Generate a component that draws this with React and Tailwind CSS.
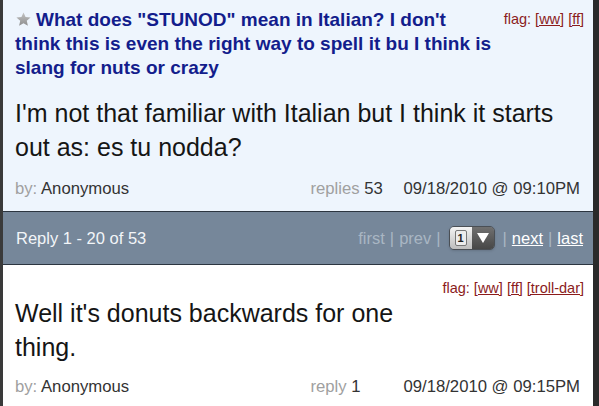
import React from "react";

const font = { fontFamily: '"Liberation Sans", Arial, sans-serif' };

const Flag = ({ troll }) => (
  <div className="text-[14.5px] text-[#8b1c1c] whitespace-nowrap leading-[15px]">
    flag: <span className="underline">[ww]</span> <span className="underline">[ff]</span>
    {troll && <> <span className="underline">[troll-dar]</span></>}
  </div>
);

const Meta = ({ label, count, date }) => (
  <div className="flex items-center text-[16.7px] leading-[17px]">
    <div>
      <span className="text-[#a0a0a0]">by:</span> <span className="text-[#333]">Anonymous</span>
    </div>
    <div className="ml-auto w-[93px] whitespace-nowrap">
      <span className="text-[#a0a0a0]">{label}</span> <span className="text-[#333]">{count}</span>
    </div>
    <div className="text-[#333] whitespace-nowrap">{date}</div>
  </div>
);

const Star = () => (
  <svg width="17" height="17" viewBox="0 0 24 24" className="inline-block align-[-2px] mr-[4px]">
    <defs>
      <linearGradient id="sg" x1="0" y1="0" x2="0" y2="1">
        <stop offset="0" stopColor="#c4c4c4" />
        <stop offset="1" stopColor="#8e8e8e" />
      </linearGradient>
    </defs>
    <path d="M12 2l2.9 6.6 7.1.6-5.4 4.7 1.6 7-6.2-3.7-6.2 3.7 1.6-7L2 9.2l7.1-.6z" fill="url(#sg)" />
  </svg>
);

export default function App() {
  return (
    <div className="w-[599px] h-[406px] flex overflow-hidden" style={font}>
      <div className="w-[3px] bg-[#3a3a3a]" />
      <div className="flex-1 flex flex-col">
        {/* question */}
        <div className="bg-[#eef5fd] h-[212px] pl-[12px] pr-[9px] pt-[8px] border-b border-[#2c3540]">
          <div className="flex items-start">
            <div className="w-[478px] text-[19px] leading-[24px] font-bold text-[#131d8c]">
              <Star />
              What does "STUNOD" mean in Italian? I don't think this is even the right way to spell it bu I think is slang for nuts or crazy
            </div>
            <div className="ml-auto pt-[4px]"><Flag /></div>
          </div>
          <div className="mt-[16px] text-[25px] leading-[34px] text-[#151515] pr-[10px]">
            I'm not that familiar with Italian but I think it starts out as: es tu nodda?
          </div>
          <div className="mt-[16px] pr-[4px]"><Meta label="replies" count={53} date="09/18/2010 @ 09:10PM" /></div>
        </div>
        {/* pager */}
        <div className="bg-[#76879a] h-[53px] flex items-center pl-[13px] pr-[10px] border-b border-[#2c3540]">
          <div className="text-[16.5px] text-[#f2f5f8]">Reply 1 - 20 of 53</div>
          <div className="ml-auto flex items-center text-[16.5px] text-[#a9b6c3]">
            <span>first</span>
            <span className="mx-[5px]">|</span>
            <span>prev</span>
            <span className="mx-[5px]">|</span>
            <div className="flex h-[24px] w-[46px] mx-[3px] rounded-[5px] overflow-hidden border border-[#4a4f55] shadow-sm">
              <div className="w-[22px] bg-gradient-to-b from-[#f4f4f4] to-[#bdbdbd] flex items-center justify-center">
                <div className="w-[12px] h-[16px] bg-[#ececec] border border-[#777] rounded-[2px] flex items-center justify-center text-[11px] font-bold text-[#222] leading-none">1</div>
              </div>
              <div className="flex-1 bg-gradient-to-b from-[#707070] to-[#474747] flex items-center justify-center">
                <svg width="12" height="10" viewBox="0 0 12 10"><path d="M0 0h12L6 10z" fill="#fff" /></svg>
              </div>
            </div>
            <span className="mx-[5px]">|</span>
            <span className="text-white underline">next</span>
            <span className="mx-[5px]">|</span>
            <span className="text-white underline">last</span>
          </div>
        </div>
        {/* reply */}
        <div className="bg-white flex-1 pl-[12px] pr-[9px] pt-[16px]">
          <div className="flex justify-end"><Flag troll /></div>
          <div className="w-[400px] text-[25px] leading-[34px] text-[#151515]">
            Well it's donuts backwards for one thing.
          </div>
          <div className="mt-[14px] pr-[4px]"><Meta label="reply" count={1} date="09/18/2010 @ 09:15PM" /></div>
        </div>
      </div>
      <div className="w-[6px] bg-[#2a2a2a]" />
    </div>
  );
}
